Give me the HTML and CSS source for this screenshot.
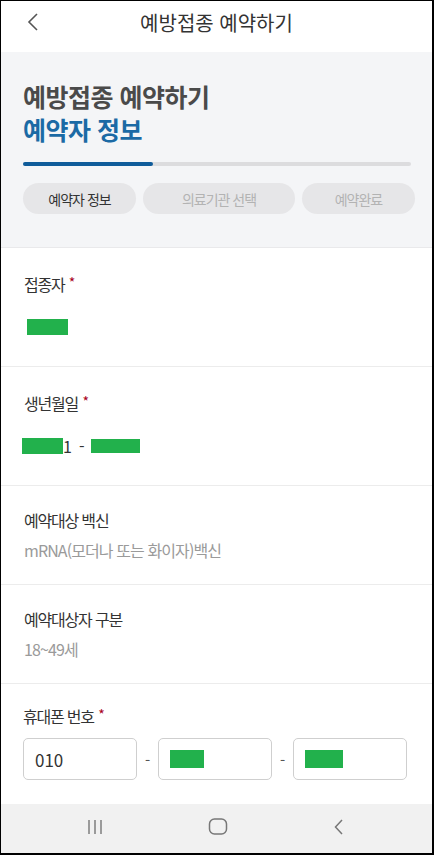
FILE: index.html
```html
<!DOCTYPE html>
<html lang="ko">

<head>
    <meta charset="UTF-8">
    <meta name="viewport" content="width=device-width, initial-scale=1.0">
    <title>예방접종 예약하기</title>

    <link rel="stylesheet" href="styles.css">
</head>

<body>

    <div class="page">

        <header class="topbar">
            <svg class="back" width="12" height="18" viewBox="0 0 12 18">
                <path d="M10 1 L2 9 L10 17" fill="none" stroke="#555" stroke-width="1.6" />
            </svg>
            <h1>예방접종 예약하기</h1>
        </header>

        <section class="intro">
            <h2>예방접종 예약하기</h2>
            <h3>예약자 정보</h3>

            <div class="progress">
                <div class="progress-fill"></div>
            </div>

            <div class="steps">
                <div class="step active">예약자 정보</div>
                <div class="step wide">의료기관 선택</div>
                <div class="step">예약완료</div>
            </div>
        </section>

        <main class="fields">

            <div class="field">
                <div class="label">접종자 <span class="req">*</span></div>
                <div class="value first">
                    <span class="mask" style="width: 41px; margin-left: 3px;"></span>
                </div>
            </div>

            <div class="field">
                <div class="label">생년월일 <span class="req">*</span></div>
                <div class="value first">
                    <span class="mask" style="width: 41px; margin-left: -2px;"></span>1<span class="sep">-</span><span class="mask" style="width: 49px; height: 14px;"></span>
                </div>
            </div>

            <div class="field short">
                <div class="label">예약대상 백신</div>
                <div class="value">mRNA(모더나 또는 화이자)백신</div>
            </div>

            <div class="field short">
                <div class="label">예약대상자 구분</div>
                <div class="value">18~49세</div>
            </div>

            <div class="field phone">
                <div class="label">휴대폰 번호 <span class="req">*</span></div>
                <div class="phone-row">
                    <div class="input">010</div>
                    <span class="dash">-</span>
                    <div class="input"><span class="mask" style="width: 34px; height: 18px;"></span></div>
                    <span class="dash">-</span>
                    <div class="input"><span class="mask" style="width: 38px; height: 18px;"></span></div>
                </div>
            </div>

        </main>

        <nav class="navbar">
            <svg width="16" height="16" viewBox="0 0 16 16">
                <path d="M2 1 V15 M8 1 V15 M14 1 V15" stroke="#777" stroke-width="1.4" />
            </svg>
            <svg width="20" height="17" viewBox="0 0 20 17">
                <rect x="1.5" y="1" width="17" height="15" rx="5" fill="none" stroke="#777" stroke-width="1.5" />
            </svg>
            <svg width="12" height="16" viewBox="0 0 12 16">
                <path d="M9 1 L2.5 8 L9 15" fill="none" stroke="#777" stroke-width="1.5" />
            </svg>
        </nav>

    </div>

</body>

</html>
```

FILE: styles.css
```css
* {
    box-sizing: border-box;
}

body {
    margin: 0;
    font-family: "Noto Sans CJK KR", "Noto Sans", sans-serif;
    color: #333;
}

.page {
    width: 434px;
    height: 855px;
    display: flex;
    flex-direction: column;
    border: 1px solid #000;
    border-right-width: 2px;
    border-bottom-width: 2px;
    background-color: #fff;
    overflow: hidden;
}

/* top app bar */
.topbar {
    height: 51px;
    flex-shrink: 0;
    display: flex;
    align-items: center;
    justify-content: center;
    position: relative;
}

.topbar h1 {
    margin: 0 0 8px 0;
    font-size: 20px;
    font-weight: 400;
    color: #333;
}

.back {
    position: absolute;
    left: 26px;
    top: 12px;
}

/* gray intro block */
.intro {
    flex-shrink: 0;
    height: 196px;
    background-color: #f4f5f7;
    padding: 28px 21px 0 22px;
    border-bottom: 1px solid #e9e9eb;
}

.intro h2,
.intro h3 {
    margin: 0;
    font-size: 25px;
    line-height: 33px;
    font-weight: 700;
    letter-spacing: -0.5px;
}

.intro h2 {
    color: #4a4a4a;
}

.intro h3 {
    color: #1b6aa5;
}

.progress {
    margin-top: 16px;
    height: 4px;
    border-radius: 2px;
    background-color: #dcdcde;
}

.progress-fill {
    width: 130px;
    height: 4px;
    border-radius: 2px;
    background-color: #0f5c9a;
}

.steps {
    display: flex;
    gap: 7px;
    margin-top: 17px;
}

.step {
    flex: 0 0 113px;
    height: 31px;
    border-radius: 16px;
    background-color: #e6e6e8;
    display: flex;
    align-items: center;
    justify-content: center;
    font-size: 14px;
    letter-spacing: -1px;
    color: #b3b3b3;
}

.step.wide {
    flex-basis: 152px;
}

.step.active {
    color: #333;
}

/* form fields */
.fields {
    flex: 1;
    overflow: hidden;
}

.field {
    height: 119px;
    padding: 22px 22px 0 23px;
    border-bottom: 1px solid #ececec;
}

.field.short {
    height: 99px;
}

.field.phone {
    height: auto;
    padding: 18px 22px 22px 22px;
    border-bottom: none;
}

.label {
    font-size: 16px;
    line-height: 24px;
    letter-spacing: -1.2px;
    color: #333;
}

.req {
    color: #a8001c;
    font-size: 14px;
    vertical-align: 3px;
    margin-left: 1px;
}

.value {
    margin-top: 6px;
    font-size: 16px;
    line-height: 24px;
    letter-spacing: -0.9px;
    color: #9a9a9a;
}

.value.first {
    margin-top: 19px;
    height: 24px;
    color: #333;
    display: flex;
    align-items: center;
    letter-spacing: 0;
}

.sep {
    margin: 0 7px 0 7px;
}

.mask {
    display: inline-block;
    height: 16px;
    background-color: #22b14c;
}

.phone-row {
    margin-top: 10px;
    display: flex;
    align-items: center;
}

.input {
    width: 114px;
    height: 42px;
    border: 1px solid #cfcfcf;
    border-radius: 5px;
    display: flex;
    align-items: center;
    padding-left: 11px;
    font-size: 17px;
    color: #333;
}

.dash {
    width: 21px;
    text-align: center;
    font-size: 15px;
    color: #555;
}

/* android nav bar */
.navbar {
    flex-shrink: 0;
    height: 49px;
    background-color: #f1f1f1;
    display: flex;
    align-items: center;
    gap: 105px;
    padding: 0 0 4px 86px;
}
```
